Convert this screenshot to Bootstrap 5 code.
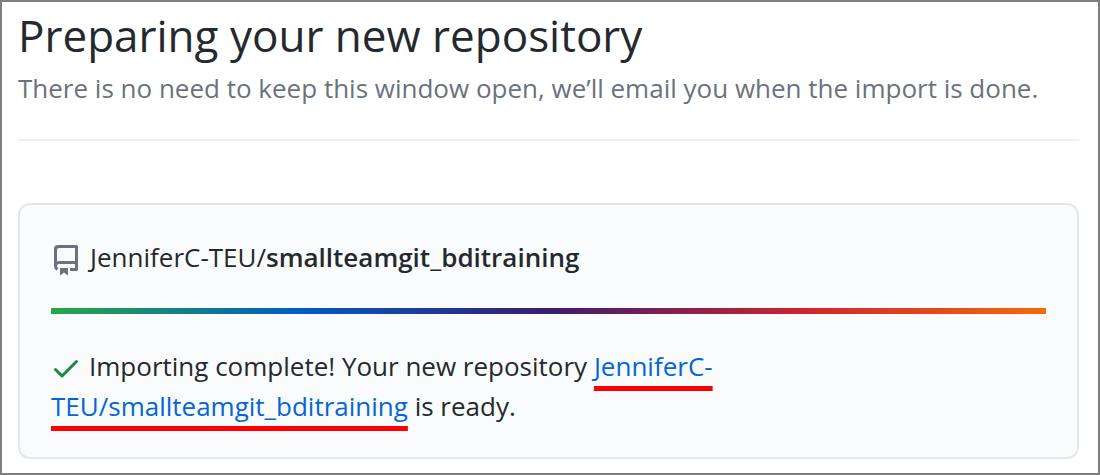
<!DOCTYPE html>
<html lang="en">
<head>
<meta charset="utf-8">
<meta name="viewport" content="width=device-width, initial-scale=1">
<title>Preparing your new repository</title>
<link href="https://cdn.jsdelivr.net/npm/bootstrap@5.3.0/dist/css/bootstrap.min.css" rel="stylesheet">
<style>
  body { font-family: "Open Sans", "Noto Sans", sans-serif; font-size: 26px; line-height: 40px; color: #24292e; background: #fff; }
  .page-frame { border: 2px solid #7f7f7f; padding: 3px 19px 14px 16px; }
  .page-title { font-size: 44px; line-height: 60px; font-weight: 400; }
  .page-note { color: #6a737d; line-height: 46px; }
  .page-rule { border-top: 2px solid #eeeff1; margin: 28px 0 62px; }
  .import-box { background: #fafbfc; border: 2px solid #e3e7eb; border-radius: 12px; padding: 32px 31px 31px; }
  .repo-icon { width: 26px; height: 32px; fill: #6a737d; margin: 5px 10px 0 3px; }
  .rainbow { height: 6px; margin: 31px 0 32px; background: linear-gradient(90deg, #28a745, #005cc5 25%, #3a1d6e 50%, #cb2431 75%, #f66a0a); }
  .check-icon { width: 26px; height: 20px; margin-right: 10px; margin-left: 2px; }
  .repo-link { color: #0366d6; text-decoration: underline #f00 5px; text-underline-offset: 10px; text-decoration-skip-ink: none; }
</style>
</head>
<body>
<main class="page-frame min-vh-100">
  <h1 class="page-title mb-0">Preparing your new repository</h1>
  <p class="page-note mb-0">There is no need to keep this window open, we’ll email you when the import is done.</p>
  <div class="page-rule"></div>
  <section class="import-box">
    <div class="d-flex align-items-center">
      <svg class="repo-icon flex-shrink-0" viewBox="0 0 26 32" aria-hidden="true"><path fill-rule="evenodd" d="M0 5a4 4 0 0 1 4-4h18.500q1.500 0 1.500 1.500V25.500q0 1.500-1.500 1.500H16v-3h5v-4H5q-2 0-2 2 0 1.300 1.500 2.300L2.500 26.500Q0 24.800 0 22ZM3 17.600q1-.6 2-.6h16V4H5q-2 0-2 2ZM6 24h8v7.500l-4-3-4 3Z"/></svg>
      <span>JenniferC-TEU/<strong class="fw-semibold">smallteamgit_bditraining</strong></span>
    </div>
    <div class="rainbow" role="progressbar" aria-label="Import progress" aria-valuenow="100" aria-valuemin="0" aria-valuemax="100"></div>
    <p class="mb-0"><svg class="check-icon" viewBox="0 0 26 20" fill="none" stroke="#22863a" stroke-width="3" stroke-linecap="round" stroke-linejoin="round" aria-hidden="true"><path d="M2.500 10.500l6.500 6.500L23.500 2.500"/></svg>Importing complete! Your new repository <a class="repo-link" href="#">JenniferC-TEU/smallteamgit_bditraining</a> is ready.</p>
  </section>
</main>
<script src="https://cdn.jsdelivr.net/npm/bootstrap@5.3.0/dist/js/bootstrap.bundle.min.js"></script>
</body>
</html>
